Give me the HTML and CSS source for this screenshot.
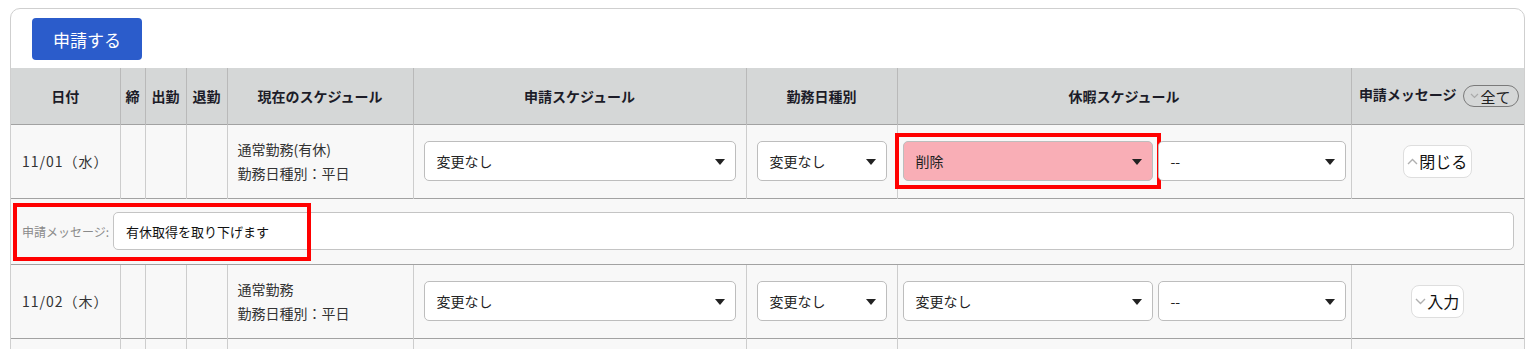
FILE: index.html
```html
<!DOCTYPE html>
<html lang="ja">
<head>
    <meta charset="UTF-8">
    <meta name="viewport" content="width=device-width, initial-scale=1.0">
    <title>勤務申請</title>
    <link rel="stylesheet" href="styles.css">
</head>
<body>
    <div class="panel">
        <div class="toolbar">
            <button class="applyBtn">申請する</button>
        </div>
        <table class="schedTable">
            <colgroup>
                <col style="width:109px">
                <col style="width:25px">
                <col style="width:41px">
                <col style="width:41px">
                <col style="width:186px">
                <col style="width:333px">
                <col style="width:151px">
                <col style="width:454px">
                <col>
            </colgroup>
            <thead>
                <tr>
                    <th>日付</th>
                    <th>締</th>
                    <th>出勤</th>
                    <th>退勤</th>
                    <th>現在のスケジュール</th>
                    <th>申請スケジュール</th>
                    <th>勤務日種別</th>
                    <th>休暇スケジュール</th>
                    <th class="msgHead">申請メッセージ<span class="allBtn"><svg width="9" height="6" viewBox="0 0 9 6"><polyline points="1,1 4.5,4.5 8,1" fill="none" stroke="#aaa" stroke-width="1.2"/></svg>全て</span></th>
                </tr>
            </thead>
            <tbody>
                <tr class="dayRow">
                    <td class="date">11/01（水）</td>
                    <td></td>
                    <td></td>
                    <td></td>
                    <td class="current">通常勤務(有休)<br>勤務日種別：平日</td>
                    <td class="pad"><div class="sel">変更なし</div></td>
                    <td class="pad"><div class="sel">変更なし</div></td>
                    <td class="leave">
                        <div class="leaveSels">
                            <div class="sel wide removed">削除</div>
                            <div class="sel narrow">--</div>
                        </div>
                    </td>
                    <td class="msgCol"><span class="toggleBtn"><svg width="11" height="7" viewBox="0 0 11 7"><polyline points="1,6 5.5,1.5 10,6" fill="none" stroke="#b0b0b0" stroke-width="1.4"/></svg>閉じる</span></td>
                </tr>
                <tr class="msgRow">
                    <td colspan="9">
                        <div class="msgLine">
                            <span class="msgLabel">申請メッセージ:</span>
                            <div class="msgInput">有休取得を取り下げます</div>
                        </div>
                        <div class="mark"></div>
                    </td>
                </tr>
                <tr class="dayRow">
                    <td class="date">11/02（木）</td>
                    <td></td>
                    <td></td>
                    <td></td>
                    <td class="current">通常勤務<br>勤務日種別：平日</td>
                    <td class="pad"><div class="sel">変更なし</div></td>
                    <td class="pad"><div class="sel">変更なし</div></td>
                    <td class="leave">
                        <div class="leaveSels">
                            <div class="sel wide">変更なし</div>
                            <div class="sel narrow">--</div>
                        </div>
                    </td>
                    <td class="msgCol"><span class="toggleBtn"><svg width="11" height="7" viewBox="0 0 11 7"><polyline points="1,1 5.5,5.5 10,1" fill="none" stroke="#b0b0b0" stroke-width="1.4"/></svg>入力</span></td>
                </tr>
                <tr class="dayRow">
                    <td></td><td></td><td></td><td></td><td></td><td></td><td></td><td></td><td></td>
                </tr>
            </tbody>
        </table>
    </div>
</body>
</html>
```

FILE: styles.css
```css
*{
    margin: 0;
    padding: 0;
    box-sizing: border-box;
}
body{
    background-color: #ffffff;
    font-family: "Noto Sans CJK JP", "Noto Sans", sans-serif;
    color: #222;
    padding: 8px 0 0 10px;
    overflow: hidden;
}
.panel{
    width: 1515px;
    border: 1px solid #cfcfcf;
    border-radius: 10px;
    background-color: #fff;
}
.toolbar{
    padding: 9px 0 8px 21px;
}
.applyBtn{
    width: 110px;
    height: 42px;
    border: none;
    border-radius: 4px;
    background-color: #2b5ccb;
    color: #fff;
    font-family: inherit;
    font-size: 17px;
}
.schedTable{
    width: 1513px;
    table-layout: fixed;
    border-collapse: collapse;
}
.schedTable th{
    height: 56px;
    background-color: #d5d7d7;
    border-left: 1px solid #b9b9b9;
    font-size: 14px;
    font-weight: 700;
    color: #1c1c28;
    text-align: center;
    white-space: nowrap;
}
.schedTable th:first-child{
    border-left: none;
}
.msgHead{
    padding: 0 2px 0 4px;
}
.allBtn{
    display: inline-flex;
    align-items: center;
    gap: 2px;
    margin-left: 6px;
    padding: 0 7px 0 6px;
    height: 22px;
    border: 1px solid #7a7a7a;
    border-radius: 11px;
    font-size: 15px;
    font-weight: 400;
    color: #222;
    vertical-align: middle;
}
.schedTable td{
    background-color: #f8f8f8;
    border-left: 1px solid #cdcdcd;
    border-top: 1px solid #a2a2a2;
    font-size: 14px;
    vertical-align: middle;
}
.schedTable td:first-child{
    border-left: none;
}
.dayRow td{
    height: 74px;
}
.date{
    padding-left: 11px;
    color: #333;
    letter-spacing: 1px;
}
.current{
    padding-left: 10px;
    line-height: 24px;
    color: #333;
}
.pad{
    padding: 0 10px;
}
.leave{
    padding: 0 5px;
}
.leaveSels{
    display: flex;
    gap: 5px;
}
.sel{
    position: relative;
    display: flex;
    align-items: center;
    height: 40px;
    padding-left: 12px;
    border: 1px solid #bdbdbd;
    border-radius: 5px;
    background-color: #fff;
    font-size: 14px;
    color: #222;
}
.sel::after{
    content: "";
    position: absolute;
    right: 10px;
    top: 17px;
    border-left: 5px solid transparent;
    border-right: 5px solid transparent;
    border-top: 6px solid #222;
}
.wide{
    width: 250px;
}
.narrow{
    width: 188px;
}
.removed{
    background-color: #f9aeb6;
}
.removed::before{
    content: "";
    position: absolute;
    left: -9px;
    top: -9px;
    right: -9px;
    bottom: -9px;
    border: 4px solid #ff0000;
}
.msgCol{
    text-align: center;
}
.toggleBtn{
    display: inline-flex;
    align-items: center;
    gap: 1px;
    height: 33px;
    padding: 0 4px 0 3px;
    border: 1px solid #dedede;
    border-radius: 8px;
    background-color: #fff;
    font-size: 16px;
    color: #111;
}
.msgRow td{
    position: relative;
    height: 66px;
    padding: 0 10px 0 11px;
}
.msgLine{
    display: flex;
    align-items: center;
}
.msgLabel{
    width: 91px;
    font-size: 12px;
    color: #8a8a8a;
    white-space: nowrap;
}
.msgInput{
    flex: 1;
    height: 38px;
    display: flex;
    align-items: center;
    padding-left: 12px;
    border: 1px solid #c4c4c4;
    border-radius: 5px;
    background-color: #fff;
    font-size: 13px;
    color: #111;
}
.mark{
    position: absolute;
    left: 2px;
    top: 4px;
    width: 298px;
    height: 58px;
    border: 4px solid #ff0000;
}
```
